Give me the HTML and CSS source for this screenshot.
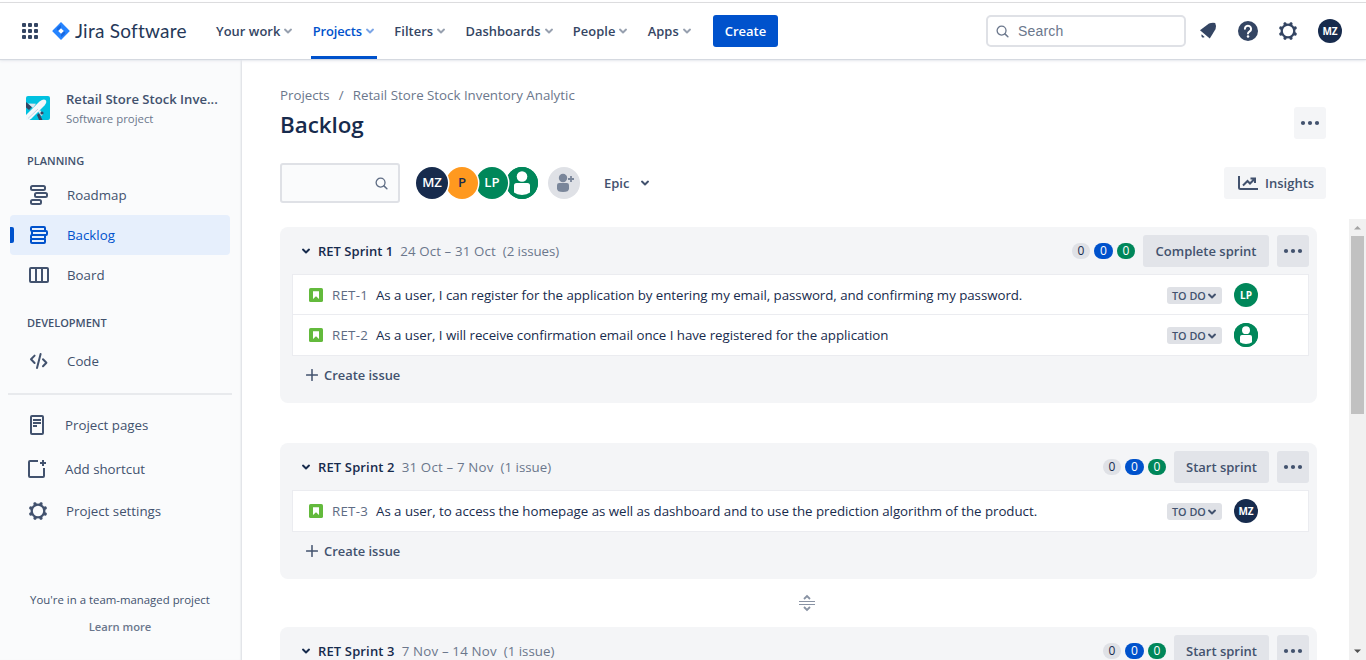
FILE: index.html
```html
<!DOCTYPE html>
<html lang="en">
<head>
<meta charset="utf-8">
<title>Backlog - Jira Software</title>
<link rel="stylesheet" href="styles.css">
</head>
<body>
<svg class="defs" width="0" height="0">
  <defs>
    <symbol id="chev" viewBox="0 0 10 10"><path d="M2 3.600 5 6.400 8 3.600" fill="none" stroke="currentColor" stroke-width="2" stroke-linecap="round" stroke-linejoin="round"/></symbol>
    <symbol id="search" viewBox="0 0 14 14"><circle cx="6" cy="6" r="4.800" fill="none" stroke="currentColor" stroke-width="1.400"/><path d="M9.600 9.600 12.800 12.600" stroke="currentColor" stroke-width="1.600" stroke-linecap="round"/></symbol>
    <symbol id="gear" viewBox="0 0 20 20"><circle cx="10" cy="10" r="6.300" fill="none" stroke="currentColor" stroke-width="2.300"/><g stroke="currentColor" stroke-width="3.200" stroke-linecap="round"><path d="M7.200 3.200 7 2.800M12.800 3.200 13 2.800M7.200 16.800 7 17.200M12.800 16.800 13 17.200M3.200 7.200 2.800 7M3.200 12.800 2.800 13M16.800 7.200 17.200 7M16.800 12.800 17.200 13"/></g></symbol>
    <symbol id="dots" viewBox="0 0 20 6"><g fill="currentColor"><circle cx="3" cy="3" r="2.100"/><circle cx="10" cy="3" r="2.100"/><circle cx="17" cy="3" r="2.100"/></g></symbol>
    <symbol id="story" viewBox="0 0 14 14"><rect width="14" height="14" rx="1.600" fill="#63ba3c"/><path d="M4 3.300h6v7.800L7 8.300l-3 2.800z" fill="#fff"/></symbol>
    <symbol id="plus" viewBox="0 0 12 12"><path d="M6 .6v10.800M.6 6h10.800" stroke="currentColor" stroke-width="1.500" stroke-linecap="round"/></symbol>
    <symbol id="person" viewBox="0 0 32 32"><circle cx="16" cy="16" r="16" fill="#00875a"/><circle cx="16" cy="9.500" r="5.300" fill="#fff"/><path d="M8 18.600a2.600 2.600 0 0 1 2.600-2.600h10.800a2.600 2.600 0 0 1 2.600 2.600v7q-3 2.400-8 2.400t-8-2.400z" fill="#fff"/></symbol>
  </defs>
</svg>

<header class="nav">
  <svg class="switcher" width="16" height="16" viewBox="0 0 16 16" fill="#344563"><rect width="4" height="4" rx="1"/><rect x="6" width="4" height="4" rx="1"/><rect x="12" width="4" height="4" rx="1"/><rect y="6" width="4" height="4" rx="1"/><rect x="6" y="6" width="4" height="4" rx="1"/><rect x="12" y="6" width="4" height="4" rx="1"/><rect y="12" width="4" height="4" rx="1"/><rect x="6" y="12" width="4" height="4" rx="1"/><rect x="12" y="12" width="4" height="4" rx="1"/></svg>
  <svg class="diamond" width="18" height="18" viewBox="0 0 18 18"><path d="M9 0 17.400 8.400Q18 9 17.400 9.600L9 18 .6 9.600Q0 9 .6 8.400Z" fill="#2684ff"/><path d="M9 3v3.200L6.200 9 4.600 7.400Q5 5 9 3z" fill="#1868e0"/><path d="M9 15v-3.200L11.800 9l1.600 1.600Q13 13 9 15z" fill="#1868e0"/><path d="M9 6.200 11.800 9 9 11.800 6.200 9z" fill="#fff"/></svg>
  <span class="brand">Jira Software</span>
  <nav class="menu">
    <a class="menu-item">Your work<svg class="chev"><use href="#chev"/></svg></a>
    <a class="menu-item active">Projects<svg class="chev"><use href="#chev"/></svg></a>
    <a class="menu-item">Filters<svg class="chev"><use href="#chev"/></svg></a>
    <a class="menu-item">Dashboards<svg class="chev"><use href="#chev"/></svg></a>
    <a class="menu-item">People<svg class="chev"><use href="#chev"/></svg></a>
    <a class="menu-item">Apps<svg class="chev"><use href="#chev"/></svg></a>
  </nav>
  <button class="create">Create</button>
  <div class="nav-right">
    <div class="nav-search"><svg width="13" height="13"><use href="#search"/></svg><span>Search</span></div>
    <svg class="bell" width="18" height="18" viewBox="0 0 18 18" fill="#344563"><path d="M1 8.200 10 1.600Q13 .2 16.200.9 17.600 4 16.600 7L10.800 16.400z"/><path d="M2.600 12.200 5.600 15Q4 16 3 15.200 2 14.200 2.600 12.200z"/></svg>
    <svg class="help" width="20" height="20" viewBox="0 0 20 20"><circle cx="10" cy="10" r="10" fill="#344563"/><path d="M6.900 7.800a3.100 3.100 0 1 1 4.800 2.600c-1.100.7-1.700 1.200-1.700 2.200" fill="none" stroke="#fff" stroke-width="2" stroke-linecap="round"/><circle cx="10" cy="15.500" r="1.250" fill="#fff"/></svg>
    <svg class="nav-gear" width="20" height="20"><use href="#gear"/></svg>
    <span class="avatar small navy">MZ</span>
  </div>
</header>

<div class="body">
  <aside class="side">
    <div class="project">
      <svg width="24" height="24" viewBox="0 0 24 24"><rect width="24" height="24" rx="2" fill="#00c1e0"/><path d="M0 6 3 8.500 6 11 3 14 0 11.500z" fill="#344563"/><path d="M2 7.500 10 7.800 7 12z" fill="#dfe5ee"/><path d="M11 19 13 17 16.500 24H13z" fill="#344563"/><path d="M12 15.500 14 14 17 18.500 15.500 20z" fill="#dfe5ee"/><path d="M0 19 13.500 5.500Q17.500 2.500 19.500 4T18.500 9.500L5.500 22.500 3.500 24H0z" fill="#f4f7fb"/><path d="M2 22.500 12 13" stroke="#c9d3e2" stroke-width="1"/><circle cx="16" cy="17" r="1.600" fill="#344563"/></svg>
      <div class="project-text"><div class="project-name">Retail Store Stock Inve...</div><div class="project-type">Software project</div></div>
    </div>
    <div class="group">PLANNING</div>
    <a class="item"><svg width="20" height="20" viewBox="0 0 20 20" fill="none" stroke="currentColor" stroke-width="2"><rect x="2" y="1" width="14" height="4" rx="1.500"/><rect x="6" y="8" width="12" height="4" rx="1.500"/><rect x="2" y="15" width="10" height="4" rx="1.500"/></svg><span>Roadmap</span></a>
    <a class="item selected"><svg width="20" height="20" viewBox="0 0 20 20" fill="none" stroke="currentColor" stroke-width="2"><rect x="2" y="2" width="14" height="4" rx="1"/><rect x="3" y="6" width="15" height="4" rx="1"/><rect x="2" y="10" width="14" height="4" rx="1"/><path d="M2 14v3q0 1 1 1h12q1 0 1-1v-3"/></svg><span>Backlog</span></a>
    <a class="item"><svg width="20" height="20" viewBox="0 0 20 20" fill="none" stroke="currentColor" stroke-width="2"><rect x="1" y="3" width="18" height="14" rx="1"/><path d="M7 3v14M13 3v14"/></svg><span>Board</span></a>
    <div class="group dev">DEVELOPMENT</div>
    <a class="item"><svg width="20" height="20" viewBox="0 0 20 20" fill="none" stroke="currentColor" stroke-width="2" stroke-linecap="round" stroke-linejoin="round"><path d="M5.600 4.600 2 8.300 5.600 12M11.600 3 8 17M14 8.200 17.400 11.700 14 15.200"/></svg><span>Code</span></a>
    <div class="rule"></div>
    <a class="link pages"><svg width="20" height="20" viewBox="0 0 20 20" fill="none" stroke="currentColor" stroke-width="2"><rect x="4" y="1" width="12" height="18" rx="1"/><path d="M6 5h8M6 8h8M6 11h4"/></svg><span>Project pages</span></a>
    <a class="link shortcut"><svg width="20" height="20" viewBox="0 0 20 20" fill="none" stroke="currentColor" stroke-width="2"><path d="M11 2H3q-1 0-1 1v14q0 1 1 1h13q1 0 1-1V9M16 1v6M13 4h6"/></svg><span>Add shortcut</span></a>
    <a class="link settings"><svg width="20" height="20"><use href="#gear"/></svg><span>Project settings</span></a>
    <div class="managed">You're in a team-managed project</div>
    <div class="learn">Learn more</div>
  </aside>

  <main class="main">
    <div class="head">
      <div class="crumbs"><span>Projects</span><span class="slash">/</span><span>Retail Store Stock Inventory Analytic</span></div>
      <div class="title-row"><h1>Backlog</h1><button class="more light"><svg width="20" height="6"><use href="#dots"/></svg></button></div>
      <div class="tools">
        <div class="filter"><svg width="13" height="13"><use href="#search"/></svg></div>
        <div class="people">
          <span class="avatar navy">MZ</span><span class="avatar orange">P</span><span class="avatar green">LP</span><span class="avatar green"><svg width="32" height="32"><use href="#person"/></svg></span>
        </div>
        <span class="add"><svg width="32" height="32" viewBox="0 0 32 32" fill="#7a869a"><circle cx="15" cy="11" r="4.200"/><path d="M9 18.200Q9 16 11.200 16h7.600Q21 16 21 18.200v3.300Q21 25 15 25t-6-3.500z"/><path d="M23 9v6M20 12h6" stroke="#7a869a" stroke-width="1.800"/></svg></span>
        <span class="epic">Epic<svg class="chev"><use href="#chev"/></svg></span>
        <button class="insights"><svg width="20" height="16" viewBox="0 0 20 16" fill="none" stroke="currentColor" stroke-width="2"><path d="M1 1v11.500q0 1.500 1.500 1.500H20"/><path d="M5 10.500 9.500 6 12 8.500 16.500 4M12.500 3.500H17V8"/></svg><span>Insights</span></button>
      </div>
    </div>
    <div class="scroll">
      <div class="sprints">
        <section class="sprint">
          <div class="sprint-head"><svg class="chev"><use href="#chev"/></svg><b class="first">RET Sprint 1</b><span class="dates">24 Oct – 31 Oct</span><span class="count">(2 issues)</span>
            <div class="actions"><i class="pill">0</i><i class="pill blue">0</i><i class="pill grn">0</i><button class="btn complete">Complete sprint</button><button class="more"><svg width="20" height="6"><use href="#dots"/></svg></button></div></div>
          <div class="list">
            <div class="row"><svg width="14" height="14"><use href="#story"/></svg><span class="key">RET-1</span><span class="sum">As a user, I can register for the application by entering my email, password, and confirming my password.</span><span class="status">TO DO<svg class="chev"><use href="#chev"/></svg></span><span class="avatar small green">LP</span></div>
            <div class="row"><svg width="14" height="14"><use href="#story"/></svg><span class="key">RET-2</span><span class="sum">As a user, I will receive confirmation email once I have registered for the application</span><span class="status">TO DO<svg class="chev"><use href="#chev"/></svg></span><span class="avatar small green"><svg width="24" height="24"><use href="#person"/></svg></span></div>
          </div>
          <div class="new"><svg width="12" height="12"><use href="#plus"/></svg><span>Create issue</span></div>
        </section>
        <div class="gap"></div>
        <section class="sprint">
          <div class="sprint-head"><svg class="chev"><use href="#chev"/></svg><b>RET Sprint 2</b><span class="dates">31 Oct – 7 Nov</span><span class="count">(1 issue)</span>
            <div class="actions"><i class="pill">0</i><i class="pill blue">0</i><i class="pill grn">0</i><button class="btn">Start sprint</button><button class="more"><svg width="20" height="6"><use href="#dots"/></svg></button></div></div>
          <div class="list">
            <div class="row"><svg width="14" height="14"><use href="#story"/></svg><span class="key">RET-3</span><span class="sum wide">As a user, to access the homepage as well as dashboard and to use the prediction algorithm of the product.</span><span class="status">TO DO<svg class="chev"><use href="#chev"/></svg></span><span class="avatar small navy">MZ</span></div>
          </div>
          <div class="new"><svg width="12" height="12"><use href="#plus"/></svg><span>Create issue</span></div>
        </section>
        <div class="gap handle"><svg width="16" height="18" viewBox="0 0 16 18" fill="none" stroke="#8993a4"><path d="M0 7.500h16M0 10.500h16" stroke-width="1.200"/><path d="M5 5 8 2l3 3M5 13l3 3 3-3" stroke-width="1.800"/></svg></div>
        <section class="sprint">
          <div class="sprint-head"><svg class="chev"><use href="#chev"/></svg><b>RET Sprint 3</b><span class="dates">7 Nov – 14 Nov</span><span class="count">(1 issue)</span>
            <div class="actions"><i class="pill">0</i><i class="pill blue">0</i><i class="pill grn">0</i><button class="btn">Start sprint</button><button class="more"><svg width="20" height="6"><use href="#dots"/></svg></button></div></div>
        </section>
      </div>
      <div class="bar"><svg width="17" height="17" viewBox="0 0 17 17"><path d="M5 10.500 8.500 7 12 10.500z" fill="#a3a3a3"/></svg><div class="thumb"></div><svg class="down" width="17" height="17" viewBox="0 0 17 17"><path d="M5 6.500h7L8.500 10z" fill="#505050"/></svg></div>
    </div>
  </main>
</div>
</body>
</html>
```
FILE: styles.css
```css
* { box-sizing: border-box; }
body { margin: 0; padding-top: 2px; width: 1366px; height: 660px; overflow: hidden; display: flex; flex-direction: column; background: #fff; color: #172b4d; font: 400 13.3px/20px "Open Sans", "Noto Sans", sans-serif; }
svg { display: block; flex: none; }
button { border: 0; padding: 0; font: inherit; }
.defs { position: absolute; }
.chev { width: 10px; height: 10px; }

.nav { flex: none; height: 57px; border-top: 1px solid #dcdcde; padding: 0 24px 0 22px; display: flex; align-items: center; box-shadow: 0 1px 1px #d5d9e0, 0 2px 3px #e9ebf0; position: relative; color: #344563; }
.diamond { margin-left: 14px; }
.brand { margin-left: 5px; width: 111px; font: 400 19px/24px Lato, sans-serif; letter-spacing: .25px; color: #253858; white-space: nowrap; }
.menu { margin-left: 30px; display: flex; gap: 19.3px; height: 56px; }
.menu-item { display: flex; align-items: center; gap: 3px; font-weight: 600; font-size: 12.9px; letter-spacing: .05px; white-space: nowrap; }
.menu-item .chev { color: #97a0af; }
.menu-item.active { color: #0052cc; margin: 0 -2px; padding: 3px 2px 0; border-bottom: 3px solid #0052cc; letter-spacing: -.1px; }
.menu-item.active .chev { color: #7ba5e6; }
.create { margin-left: auto; width: 65px; height: 32px; border-radius: 3px; background: #0052cc; color: #fff; font-weight: 600; font-size: 13px; }
.nav-right { margin-left: 208px; display: flex; align-items: center; }
.nav-search { width: 200px; height: 32px; margin-right: 13px; border: 2px solid #dfe1e6; border-radius: 5px; padding-left: 8px; display: flex; align-items: center; gap: 9px; color: #6b778c; font: 14px/20px "Liberation Sans", Arial, sans-serif; letter-spacing: .2px; }
.help { margin: 0 20px 0 21px; }
.nav-gear { margin-right: 20px; }

.avatar { width: 32px; height: 32px; border-radius: 50%; display: flex; align-items: center; justify-content: center; color: #fff; font: 600 13.2px/1 "Open Sans", sans-serif; }
.avatar.small { width: 24px; height: 24px; font-weight: 700; font-size: 10px; }
.navy { background: #172b4d; }
.orange { background: #ff991f; color: #172b4d; }
.green { background: #00875a; }

.body { flex: 1; min-height: 0; display: flex; }
.side { width: 242px; flex: none; background: #fafbfc; border-right: 1px solid #e3e5e9; padding-top: 30px; color: #42526e; box-shadow: inset -1px 0 1px #eef0f2; }
.project { display: flex; align-items: center; gap: 16px; height: 40px; padding-left: 26px; }
.project > svg { margin-top: -2px; }
.project-text { margin-top: -2px; }
.project-name { font-weight: 600; font-size: 13.1px; white-space: nowrap; }
.project-type { font-size: 11.400px; color: #6b778c; line-height: 19px; }
.group { margin-left: 27px; margin-top: 22px; height: 20px; font-weight: 600; font-size: 11px; }
.group + .item { margin-top: 4px; }
.group.dev { margin-top: 18px; }
.dev + .item { margin-top: 8px; }
.item { height: 40px; margin-left: 10px; width: 220px; border-radius: 3px; padding-left: 19px; display: flex; align-items: center; gap: 18px; }
.item.selected { background: #e6effc; color: #0052cc; border-radius: 4px; padding-left: 0; gap: 0; }
.selected::before { content: ""; width: 4px; height: 16px; background: #0052cc; border-radius: 0 2px 2px 0; margin-right: 15px; }
.selected span { margin-left: 18px; }
.rule { height: 2px; margin: 12px 9px 0 8px; background: #e8eaed; }
.link { height: 20px; display: flex; align-items: center; gap: 18px; padding-left: 27px; }
.pages { margin-top: 20px; }
.shortcut { margin-top: 24px; }
.settings { margin-top: 22px; padding-left: 28px; }
.managed, .learn { width: 240px; text-align: center; font-size: 11.400px; }
.managed { margin-top: 69px; }
.learn { margin-top: 7px; color: #6b778c; font-weight: 600; font-size: 11.200px; }

.main { flex: 1; min-width: 0; display: flex; flex-direction: column; }
.head { height: 160px; flex: none; padding: 26px 40px 0 38px; }
.crumbs { display: flex; color: #6b778c; white-space: nowrap; }
.slash { width: 23px; text-align: center; }
.title-row { height: 34px; display: flex; justify-content: space-between; align-items: flex-start; }
h1 { margin: 6px 0 0; font-size: 22.400px; line-height: 28px; font-weight: 600; letter-spacing: -.05px; }
.more { width: 32px; height: 32px; border-radius: 3px; background: #e2e4e9; color: #42526e; display: flex; align-items: center; justify-content: center; }
.more.light { margin-top: 2px; background: #f4f5f7; }
.tools { display: flex; align-items: center; height: 40px; margin-top: 24px; }
.filter { width: 120px; height: 40px; border: 2px solid #dfe1e6; border-radius: 3px; background: #fafbfc; display: flex; align-items: center; justify-content: flex-end; padding-right: 10px; color: #5e6c84; }
.people { display: flex; margin-left: 16px; }
.people .avatar { margin-right: -2px; position: relative; z-index: 1; box-shadow: 0 0 0 1.500px #fff; }
.people .avatar:nth-child(1) { z-index: 4; }
.people .avatar:nth-child(2) { z-index: 3; }
.people .avatar:nth-child(3) { z-index: 2; }
.add { margin-left: 12px; width: 32px; height: 32px; border-radius: 50%; background: #dfe1e6; }
.epic { margin-left: 24px; display: flex; align-items: center; gap: 11px; color: #42526e; font-weight: 600; font-size: 13px; }
.insights { margin-left: auto; width: 102px; height: 32px; border-radius: 3px; background: #f4f5f7; color: #42526e; display: flex; align-items: center; gap: 7px; padding-left: 14px; font-weight: 600; font-size: 13px; }

.scroll { flex: 1; min-height: 0; display: flex; justify-content: space-between; overflow: hidden; }
.sprints { margin-left: 38px; padding-top: 8px; width: 1037px; }
.sprint { background: #f4f5f7; border-radius: 8px; padding: 8px 8px 0 12px; }
.sprint-head { height: 32px; display: flex; align-items: center; padding-left: 9px; white-space: nowrap; }
.sprint-head b { font-weight: 600; font-size: 13px; letter-spacing: .14px; margin-left: 7px; }
.sprint-head b.first { letter-spacing: .02px; }
.dates { margin-left: 7px; color: #6b778c; letter-spacing: .18px; }
.count { margin-left: 7px; color: #6b778c; }
.first ~ .dates { letter-spacing: .12px; }
.first ~ .count { letter-spacing: -.06px; }
.actions { margin-left: auto; display: flex; align-items: center; }
.pill { width: 18px; height: 16px; margin-right: 4px; border-radius: 8px; background: #dfe1e6; font: 400 12px/16px "Open Sans", sans-serif; text-align: center; }
.pill.blue { background: #0052cc; color: #fff; width: 19px; }
.pill.grn { background: #00875a; color: #fff; margin-right: 8px; }
.btn { width: 95px; height: 32px; border-radius: 3px; background: #e2e4e9; color: #42526e; font-weight: 600; font-size: 13px; margin-right: 8px; }
.btn.complete { width: 126px; }
.list { margin-top: 7px; border: 1px solid #ebecf0; background: #fff; }
.row { height: 40px; display: flex; align-items: center; padding: 0 50px 0 16px; }
.row + .row { box-shadow: 0 -1px #ebecf0; }
.key { width: 44px; margin-left: 9px; color: #5e6c84; white-space: nowrap; letter-spacing: .25px; }
.sum { white-space: nowrap; letter-spacing: -.045px; }
.sum.wide { letter-spacing: -.03px; }
.status { margin: 1px 12px 0 auto; width: 55px; height: 17px; padding-left: 5px; border-radius: 3px; background: #dfe1e6; color: #42526e; font: 600 10.8px/17px "Open Sans", sans-serif; display: flex; align-items: center; gap: 1px; white-space: nowrap; }
.new { height: 47px; padding: 9px 0 0 14px; display: flex; gap: 6px; font-weight: 600; font-size: 12.9px; color: #42526e; }
.new svg { margin-top: 4px; }
.gap { height: 40px; }
.handle { height: 48px; display: flex; align-items: center; justify-content: center; padding-left: 17px; }
.bar { width: 17px; background: #f1f1f1; display: flex; flex-direction: column; }
.thumb { width: 13px; height: 178px; margin-left: 2px; background: #c1c1c1; }
.down { margin-top: auto; }
```
